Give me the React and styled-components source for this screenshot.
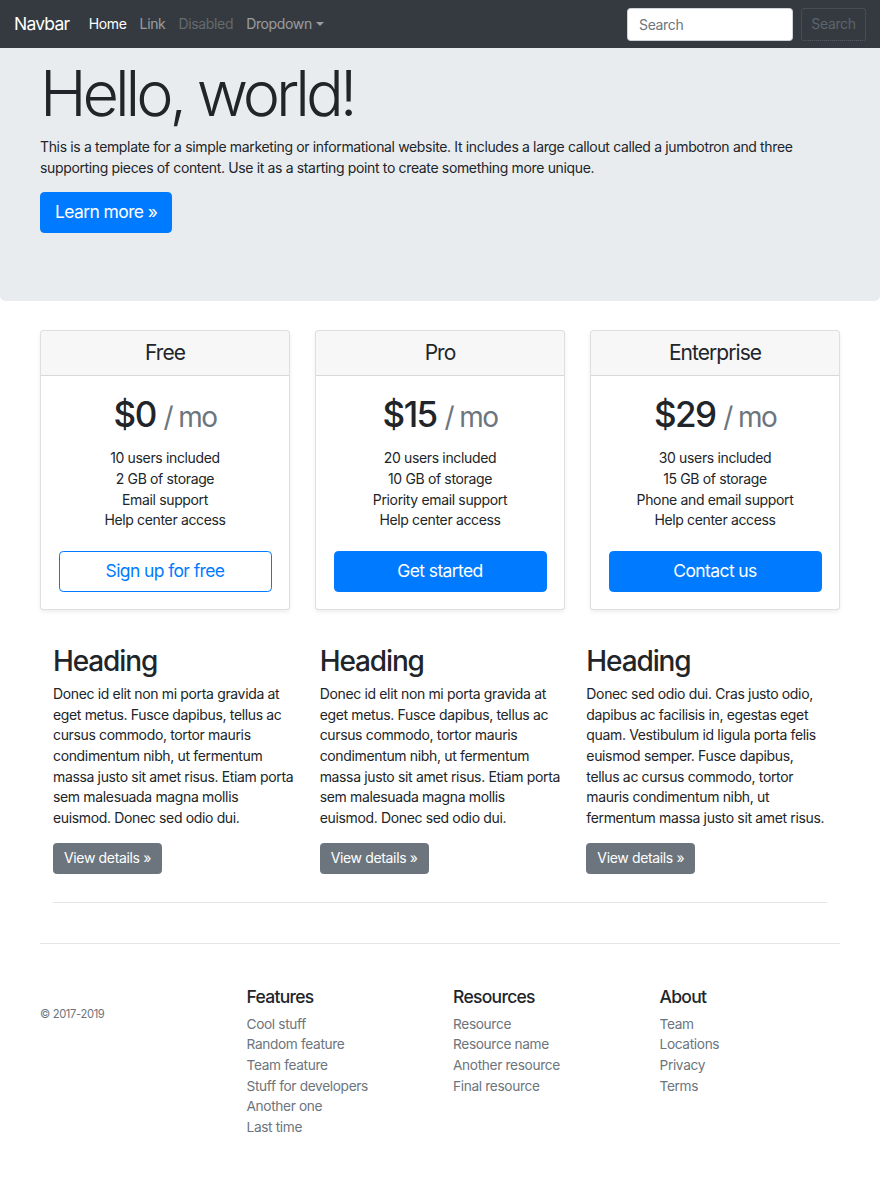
import React from "react";
import styled, { createGlobalStyle } from "styled-components";

const Global = createGlobalStyle`
  * { box-sizing: border-box; }
  body {
    margin: 0;
    font-family: Inter, "Noto Sans", sans-serif;
    font-size: 14px;
    line-height: 20.67px;
    letter-spacing: -0.025em;
    color: #212529;
    background: #fff;
  }
  h1, h2, h3, h4, h5, p, ul { margin: 0; }
`;

const Navbar = styled.nav`
  height: 48px;
  background: #343a40;
  display: flex;
  align-items: center;
  padding: 0 14px;
`;

const Brand = styled.a`
  color: #fff;
  font-size: 17.5px;
  letter-spacing: -0.045em;
  margin-right: 13px;
  text-decoration: none;
  line-height: 1.5;
`;

const NavList = styled.ul`
  list-style: none;
  padding: 0;
  display: flex;
  flex: 1;
`;

const NavLink = styled.a`
  display: inline-flex;
  align-items: center;
  padding: 7px 6.5px;
  text-decoration: none;
  color: ${(p) =>
    p.$active ? "#fff" : p.$disabled ? "rgba(255,255,255,.25)" : "rgba(255,255,255,.5)"};
`;

const Caret = styled.span`
  display: inline-block;
  margin-left: 4px;
  border-top: 4.5px solid currentColor;
  border-left: 4px solid transparent;
  border-right: 4px solid transparent;
`;

const SearchForm = styled.form`
  display: flex;
  align-items: center;
  gap: 8px;
`;

const SearchInput = styled.input`
  width: 166px;
  height: 33px;
  border: 1px solid #ced4da;
  border-radius: 3.5px;
  padding: 5px 11px;
  font: inherit;
  font-size: 14px;
  letter-spacing: inherit;
  color: #495057;
  background: #fff;
  &::placeholder { color: #6c757d; }
`;

const SearchButton = styled.button`
  height: 33px;
  width: 65px;
  padding: 0;
  border: 1px dotted #5a6067;
  border-radius: 3.5px;
  background: transparent;
  color: #5e646a;
  font: inherit;
  font-size: 14px;
  letter-spacing: inherit;
`;

const Jumbotron = styled.section`
  background: #e9ecef;
  border-radius: 0 0 5px 5px;
  padding: 8px 0 54px;
  margin-bottom: 29px;
`;

const Container = styled.div`
  width: 800px;
  margin: 0 auto;
`;

const Display = styled.h1`
  font-size: 63px;
  font-weight: 300;
  line-height: 1.2;
  margin-bottom: 4px;
  letter-spacing: -0.065em;
`;

const Para = styled.p`
  margin-bottom: ${(p) => (p.$tight ? "14px" : "14px")};
  line-height: ${(p) => (p.$lead ? "21px" : "inherit")};
`;

const Button = styled.a`
  display: inline-block;
  text-decoration: none;
  text-align: center;
  border: 1px solid transparent;
  border-radius: ${(p) => (p.$size === "lg" ? "4.2px" : "3.5px")};
  font-size: ${(p) => (p.$size === "lg" ? "17.5px" : "14px")};
  letter-spacing: ${(p) => (p.$size === "lg" ? "-0.035em" : "-0.025em")};
  line-height: ${(p) => (p.$size === "lg" ? "26px" : "20px")};
  padding: ${(p) => (p.$size === "lg" ? "6.5px 14px" : "4.5px 10px")};
  width: ${(p) => (p.$block ? "100%" : "auto")};
  ${(p) =>
    p.$variant === "primary"
      ? "background:#007bff;color:#fff;border-color:#007bff;"
      : p.$variant === "outline"
      ? "background:#fff;color:#007bff;border-color:#007bff;"
      : "background:#6c757d;color:#fff;border-color:#6c757d;"}
`;

const CardDeck = styled.div`
  display: grid;
  grid-template-columns: repeat(3, 1fr);
  gap: 25px;
  margin-bottom: 35px;
`;

const Card = styled.div`
  border: 1px solid rgba(0, 0, 0, 0.125);
  border-radius: 4px;
  box-shadow: 0 2px 4px rgba(0, 0, 0, 0.075);
  background: #fff;
  text-align: center;
  overflow: hidden;
`;

const CardHeader = styled.div`
  background: rgba(0, 0, 0, 0.03);
  border-bottom: 1px solid rgba(0, 0, 0, 0.125);
  padding: 9.5px 17.5px;
`;

const CardTitle = styled.h4`
  font-size: 21px;
  font-weight: 400;
  line-height: 1.2;
  letter-spacing: -0.045em;
`;

const CardBody = styled.div`
  padding: 17.5px;
`;

const Price = styled.h1`
  font-size: 35px;
  font-weight: 500;
  line-height: 1.2;
  letter-spacing: -0.045em;
  margin-bottom: 13px;
`;

const PriceUnit = styled.small`
  font-size: 80%;
  font-weight: 400;
  color: #6c757d;
`;

const Features = styled.ul`
  list-style: none;
  padding: 0;
  margin-bottom: 20px;
`;

const MarketRow = styled.div`
  display: grid;
  grid-template-columns: repeat(3, 1fr);
  padding: 0 13px;
  column-gap: 26px;
`;

const Heading = styled.h2`
  font-size: 28px;
  font-weight: 500;
  line-height: 1.2;
  letter-spacing: -0.04em;
  margin-bottom: 5px;
`;

const Divider = styled.hr`
  border: 0;
  border-top: 1px solid rgba(0, 0, 0, 0.1);
  margin: 14px 13px 0;
`;

const Footer = styled.footer`
  width: 800px;
  margin: 40px auto 42px;
  border-top: 1px solid #e5e5e5;
  padding-top: 42px;
  display: grid;
  grid-template-columns: repeat(4, 1fr);
  column-gap: 26px;
`;

const Copyright = styled.small`
  display: block;
  font-size: 11.2px;
  color: #6c757d;
  padding-top: 18px;
`;

const FooterTitle = styled.h5`
  font-size: 17.5px;
  font-weight: 500;
  line-height: 1.2;
  letter-spacing: -0.04em;
  margin-bottom: 7px;
`;

const FooterList = styled.ul`
  list-style: none;
  padding: 0;
  font-size: 13.7px;
  line-height: 20.6px;
`;

const FooterLink = styled.a`
  color: #6c757d;
  text-decoration: none;
`;

const plans = [
  {
    name: "Free",
    price: "$0",
    items: ["10 users included", "2 GB of storage", "Email support", "Help center access"],
    cta: "Sign up for free",
    variant: "outline",
  },
  {
    name: "Pro",
    price: "$15",
    items: ["20 users included", "10 GB of storage", "Priority email support", "Help center access"],
    cta: "Get started",
    variant: "primary",
  },
  {
    name: "Enterprise",
    price: "$29",
    items: ["30 users included", "15 GB of storage", "Phone and email support", "Help center access"],
    cta: "Contact us",
    variant: "primary",
  },
];

const lorem1 =
  "Donec id elit non mi porta gravida at eget metus. Fusce dapibus, tellus ac cursus commodo, tortor mauris condimentum nibh, ut fermentum massa justo sit amet risus. Etiam porta sem malesuada magna mollis euismod. Donec sed odio dui.";
const lorem3 =
  "Donec sed odio dui. Cras justo odio, dapibus ac facilisis in, egestas eget quam. Vestibulum id ligula porta felis euismod semper. Fusce dapibus, tellus ac cursus commodo, tortor mauris condimentum nibh, ut fermentum massa justo sit amet risus.";

const footerCols = [
  {
    title: "Features",
    links: ["Cool stuff", "Random feature", "Team feature", "Stuff for developers", "Another one", "Last time"],
  },
  { title: "Resources", links: ["Resource", "Resource name", "Another resource", "Final resource"] },
  { title: "About", links: ["Team", "Locations", "Privacy", "Terms"] },
];

export default function App() {
  return (
    <>
      <Global />
      <Navbar>
        <Brand href="#">Navbar</Brand>
        <NavList>
          <li><NavLink $active href="#">Home</NavLink></li>
          <li><NavLink href="#">Link</NavLink></li>
          <li><NavLink $disabled href="#">Disabled</NavLink></li>
          <li><NavLink href="#">Dropdown<Caret /></NavLink></li>
        </NavList>
        <SearchForm onSubmit={(e) => e.preventDefault()}>
          <SearchInput placeholder="Search" />
          <SearchButton type="button">Search</SearchButton>
        </SearchForm>
      </Navbar>

      <Jumbotron>
        <Container>
          <Display>Hello, world!</Display>
          <Para $lead>
            This is a template for a simple marketing or informational website. It includes a large
            callout called a jumbotron and three supporting pieces of content. Use it as a starting
            point to create something more unique.
          </Para>
          <Para>
            <Button $variant="primary" $size="lg" href="#">Learn more »</Button>
          </Para>
        </Container>
      </Jumbotron>

      <Container>
        <CardDeck>
          {plans.map((p) => (
            <Card key={p.name}>
              <CardHeader>
                <CardTitle>{p.name}</CardTitle>
              </CardHeader>
              <CardBody>
                <Price>
                  {p.price} <PriceUnit>/ mo</PriceUnit>
                </Price>
                <Features>
                  {p.items.map((i) => (
                    <li key={i}>{i}</li>
                  ))}
                </Features>
                <Button $variant={p.variant} $size="lg" $block href="#">{p.cta}</Button>
              </CardBody>
            </Card>
          ))}
        </CardDeck>

        <MarketRow>
          {[lorem1, lorem1, lorem3].map((t, i) => (
            <div key={i}>
              <Heading>Heading</Heading>
              <Para>{t}</Para>
              <Para>
                <Button $variant="secondary" href="#">View details »</Button>
              </Para>
            </div>
          ))}
        </MarketRow>
        <Divider />
      </Container>

      <Footer>
        <div>
          <Copyright>© 2017-2019</Copyright>
        </div>
        {footerCols.map((c) => (
          <div key={c.title}>
            <FooterTitle>{c.title}</FooterTitle>
            <FooterList>
              {c.links.map((l) => (
                <li key={l}><FooterLink href="#">{l}</FooterLink></li>
              ))}
            </FooterList>
          </div>
        ))}
      </Footer>
    </>
  );
}
